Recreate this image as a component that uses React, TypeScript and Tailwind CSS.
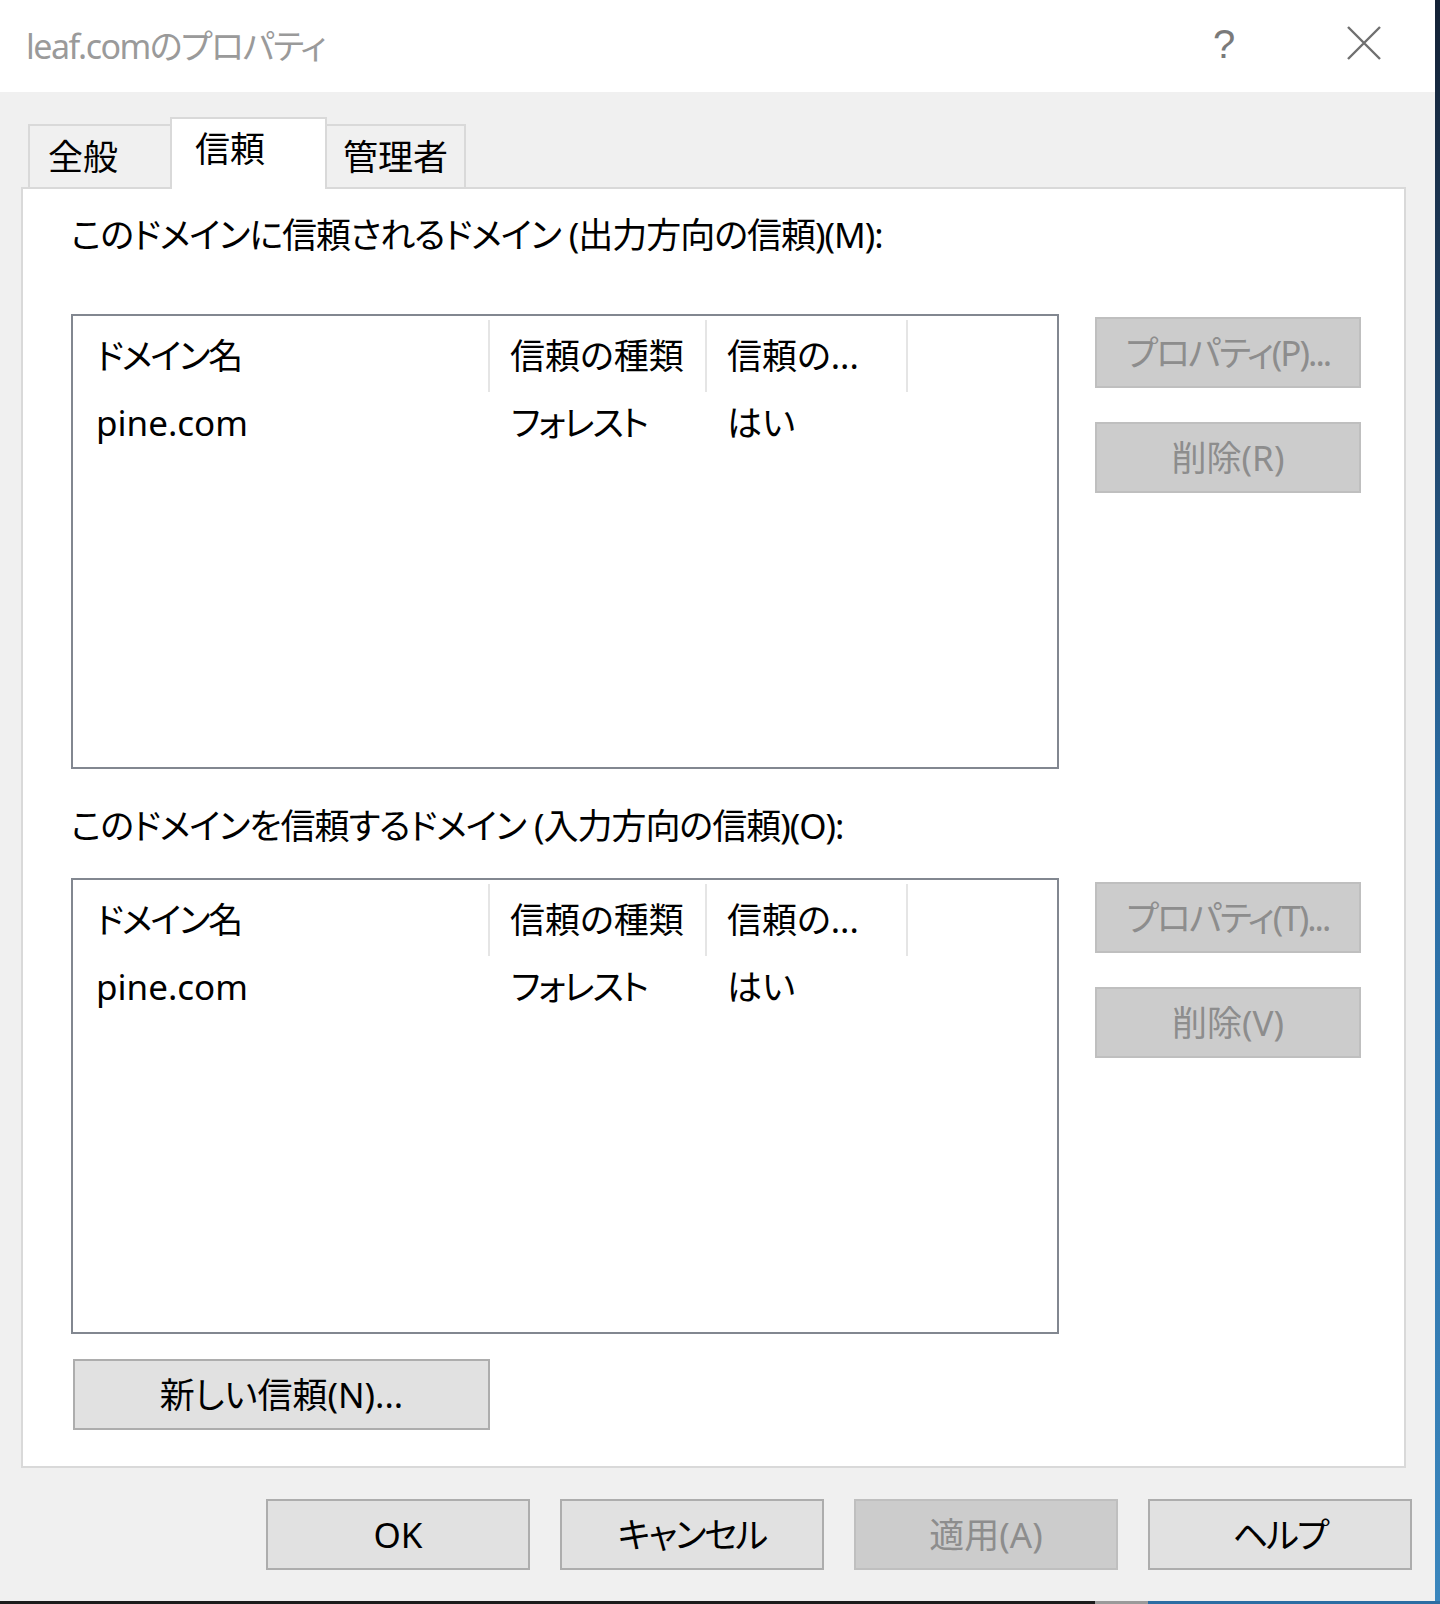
const font = "font-['Noto_Sans','Noto_Sans_CJK_JP',sans-serif] [font-feature-settings:'palt']";

function Btn({ label, disabled, w = "w-[264px]", tight }: { label: string; disabled?: boolean; w?: string; tight?: boolean }) {
  return (
    <div
      className={`${w} h-[71px] flex items-center justify-center border-2 text-[35px] ${tight ? "tracking-[-2px]" : ""} ${
        disabled ? "bg-[#cccccc] border-[#bfbfbf] text-[#8d8d8d]" : "bg-[#e1e1e1] border-[#adadad] text-black"
      }`}
    >
      {label}
    </div>
  );
}

function TrustList({ h }: { h: string }) {
  return (
    <div className={`w-[988px] ${h} border-2 border-[#828790] bg-white`}>
      <div className="flex h-[72px] mt-[4px]">
        <div className="w-[417px] border-r-2 border-[#e5e5e5] pl-[23px] flex items-center tracking-[-2px]">ドメイン名</div>
        <div className="w-[217px] border-r-2 border-[#e5e5e5] pl-[20px] flex items-center">信頼の種類</div>
        <div className="w-[201px] border-r-2 border-[#e5e5e5] pl-[20px] flex items-center">信頼の...</div>
      </div>
      <div className="flex h-[62px] items-center">
        <div className="w-[417px] pl-[23px]">pine.com</div>
        <div className="w-[217px] pl-[21px] tracking-[-2px]">フォレスト</div>
        <div className="w-[201px] pl-[20px]">はい</div>
      </div>
    </div>
  );
}

export default function App() {
  return (
    <div className={`w-[1440px] h-[1604px] flex flex-col ${font} text-[35px] leading-[44px] text-black`}>
      <div className="flex flex-1">
        <div className="w-[1435px] flex flex-col">
          {/* title bar */}
          <div className="h-[92px] bg-white flex items-center pl-[26px] relative">
            <span className="text-[#9a9a9a] text-[34px] tracking-[-1.5px]">leaf.comのプロパティ</span>
            <span className="absolute left-[1213px] top-[20px] text-[40px] leading-[48px] text-[#7a7a7a] font-['Liberation_Sans',sans-serif]">?</span>
            <svg className="absolute left-[1346px] top-[26px]" width="36" height="34" viewBox="0 0 36 34">
              <path d="M2 1 L34 33 M34 1 L2 33" stroke="#6f6f6f" strokeWidth="2.4" fill="none" />
            </svg>
          </div>

          {/* body */}
          <div className="flex-1 bg-[#f0f0f0] flex flex-col pt-[25px]">
            {/* tabs */}
            <div className="flex items-end h-[70px] pl-[28px] relative z-10">
              <div className="w-[144px] h-[63px] border-2 border-b-0 border-[#d9d9d9] bg-[#f0f0f0] pl-[18px] pt-[9px]">全般</div>
              <div className="w-[157px] h-[72px] -mb-[2px] border-2 border-b-0 border-[#d9d9d9] bg-white pl-[23px] pt-[8px] -ml-[2px]">信頼</div>
              <div className="w-[139px] h-[63px] border-2 border-b-0 border-l-0 border-[#d9d9d9] bg-[#f0f0f0] pl-[16px] pt-[9px]">管理者</div>
            </div>

            {/* panel */}
            <div className="ml-[21px] w-[1385px] h-[1281px] border-2 border-[#d9d9d9] bg-white pl-[48px] flex flex-col">
              <div className="mt-[24px] h-[44px] tracking-[-1px]">このドメインに信頼されるドメイン (出力方向の信頼)(M):</div>
              <div className="mt-[57px] flex gap-[36px]">
                <TrustList h="h-[455px]" />
                <div className="mt-[3px] flex flex-col gap-[34px]">
                  <Btn label="プロパティ(P)..." disabled w="w-[266px]" tight />
                  <Btn label="削除(R)" disabled w="w-[266px]" />
                </div>
              </div>
              <div className="mt-[35px] h-[44px] tracking-[-1px]">このドメインを信頼するドメイン (入力方向の信頼)(O):</div>
              <div className="mt-[30px] flex gap-[36px]">
                <TrustList h="h-[456px]" />
                <div className="mt-[4px] flex flex-col gap-[34px]">
                  <Btn label="プロパティ(T)..." disabled w="w-[266px]" tight />
                  <Btn label="削除(V)" disabled w="w-[266px]" />
                </div>
              </div>
              <div className="mt-[25px] ml-[2px]">
                <Btn label="新しい信頼(N)..." w="w-[417px]" />
              </div>
            </div>

            {/* bottom buttons */}
            <div className="mt-[31px] flex justify-end gap-[30px] pr-[23px]">
              <Btn label="OK" />
              <Btn label="キャンセル" tight />
              <Btn label="適用(A)" disabled />
              <Btn label="ヘルプ" tight />
            </div>
          </div>
        </div>
        <div className="w-[5px] bg-gradient-to-b from-[#142236] via-[#2a6ca3] to-[#3a86bd]" />
      </div>
      <div className="h-[3px] flex">
        <div className="w-[1095px] bg-[#1c1c1c]" />
        <div className="w-[53px] bg-[#9a9a9a]" />
        <div className="flex-1 bg-[#2c6da3]" />
      </div>
    </div>
  );
}
